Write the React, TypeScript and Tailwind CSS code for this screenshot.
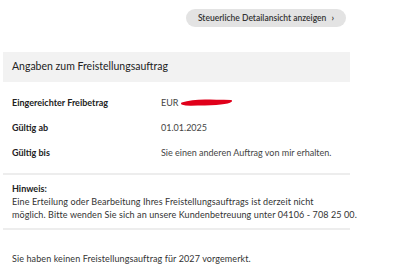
import React from 'react';

const Row = ({ label, children }: { label: string; children: React.ReactNode }) => (
  <div className="flex items-center h-[25px]">
    <div className="w-[149px] shrink-0 font-bold text-[#222]">{label}</div>
    <div className="text-[#444]">{children}</div>
  </div>
);

const App = () => {
  return (
    <div
      className="w-[399px] h-[278px] bg-white overflow-hidden text-[9px]"
      style={{ fontFamily: 'Lato, "Open Sans", sans-serif' }}
    >
      <div className="flex justify-end pr-[53px] pt-[9px]">
        <button className="h-[18px] px-[12px] rounded-full bg-[#e3e3e3] text-[#333] text-[8.5px] font-semibold flex items-center gap-[5px]">
          Steuerliche Detailansicht anzeigen
          <span className="text-[9px]">›</span>
        </button>
      </div>

      <div className="mx-[3px] w-[347px] mt-[25px] h-[30px] bg-[#f2f2f2] flex items-center px-[9px] text-[10.5px] text-[#222]">
        Angaben zum Freistellungsauftrag
      </div>

      <div className="px-[12px] pt-[8px] pb-[8px]">
        <Row label="Eingereichter Freibetrag">
          <span className="flex items-center gap-[2px]">
            EUR
            <svg width="54" height="9" viewBox="0 0 54 9">
              <path
                d="M2 5.5 C 10 3, 20 2.2, 30 2.6 S 46 2.2, 51 3 C 47 6, 32 6.6, 18 6.6 S 6 7, 2 5.5 Z"
                fill="#e0001b"
                stroke="#e0001b"
                strokeWidth="2"
                strokeLinejoin="round"
              />
            </svg>
          </span>
        </Row>
        <Row label="Gültig ab">01.01.2025</Row>
        <Row label="Gültig bis">Sie einen anderen Auftrag von mir erhalten.</Row>
      </div>

      <div className="mx-[3px] w-[347px] h-[2px] bg-[#ededed]" />

      <div className="px-[12px] pt-[7px] pb-[7px] text-[#333] leading-[13px]">
        <div className="font-bold text-[#222]">Hinweis:</div>
        <div className="whitespace-nowrap tracking-[0.1px]">
          Eine Erteilung oder Bearbeitung Ihres Freistellungsauftrags ist derzeit nicht
          <br />
          möglich. Bitte wenden Sie sich an unsere Kundenbetreuung unter 04106 - 708 25 00.
        </div>
      </div>

      <div className="mx-[3px] w-[347px] h-[2px] bg-[#ededed]" />

      <div className="px-[12px] pt-[22px] text-[#333] tracking-[0.1px]">
        Sie haben keinen Freistellungsauftrag für 2027 vorgemerkt.
      </div>
    </div>
  );
};

export default App;
